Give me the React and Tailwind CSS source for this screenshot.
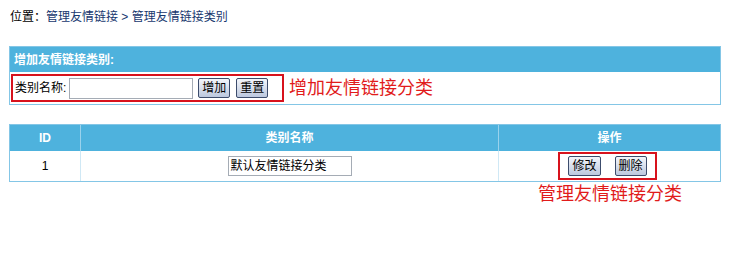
export default function App() {
  return (
    <div
      className="h-[255px] w-[735px] bg-white text-[12px] text-black"
      style={{ fontFamily: '"Liberation Sans", "Noto Sans CJK SC", sans-serif' }}
    >
      {/* breadcrumb */}
      <div className="flex h-[33px] items-center pl-[10px] leading-none">
        <span className="text-black">位置：</span>
        <span className="text-[#17376e]">管理友情链接 &gt; 管理友情链接类别</span>
      </div>

      {/* add category box */}
      <div className="ml-[9px] mt-[13px] w-[712px] border border-[#84c6e6]">
        <div className="flex h-[25px] items-center bg-[#4eb2dd] pl-[4px] font-bold text-white">
          增加友情链接类别:
        </div>
        <div className="flex h-[32px] items-center">
          <div className="ml-px flex h-[28px] w-[273px] items-center border-2 border-[#d7121c] pl-[2px]">
            <span>类别名称:</span>
            <input className="ml-[3px] h-[21px] w-[124px] border border-[#a5acb5] bg-white" />
            <button className="ml-[5px] h-[20px] rounded-[2px] border border-[#3c4c6c] bg-gradient-to-b from-[#f4f6fb] to-[#bcc8de] px-[3px] leading-none">
              增加
            </button>
            <button className="ml-[6px] h-[20px] rounded-[2px] border border-[#3c4c6c] bg-gradient-to-b from-[#f4f6fb] to-[#bcc8de] px-[3px] leading-none">
              重置
            </button>
          </div>
          <span className="ml-[5px] text-[18px] leading-none text-[#e11b1b]">增加友情链接分类</span>
        </div>
      </div>

      {/* list table */}
      <div className="ml-[9px] mt-[19px] w-[712px] border border-[#84c6e6]">
        <div className="flex h-[26px] bg-[#4eb2dd] font-bold text-white">
          <div className="flex w-[71px] items-center justify-center border-r border-[#9ad2ec]">ID</div>
          <div className="flex w-[418px] items-center justify-center border-r border-[#9ad2ec]">类别名称</div>
          <div className="flex flex-1 items-center justify-center">操作</div>
        </div>
        <div className="flex h-[30px]">
          <div className="flex w-[71px] items-center justify-center border-r border-[#cfe8f5]">1</div>
          <div className="flex w-[418px] items-center justify-center border-r border-[#cfe8f5]">
            <div className="flex h-[20px] w-[124px] items-center border border-[#a5acb5] pl-[2px]">
              默认友情链接分类
            </div>
          </div>
          <div className="flex flex-1 items-center">
            <div className="ml-[59px] flex h-[28px] w-[99px] items-center justify-center gap-[14px] border-2 border-[#d7121c]">
              <button className="h-[20px] rounded-[2px] border border-[#3c4c6c] bg-gradient-to-b from-[#f4f6fb] to-[#bcc8de] px-[3px] leading-none">
                修改
              </button>
              <button className="h-[20px] rounded-[2px] border border-[#3c4c6c] bg-gradient-to-b from-[#f4f6fb] to-[#bcc8de] px-[3px] leading-none">
                删除
              </button>
            </div>
          </div>
        </div>
      </div>
      <div className="ml-[538px] mt-[3px] text-[18px] leading-none text-[#e11b1b]">管理友情链接分类</div>
    </div>
  );
}
